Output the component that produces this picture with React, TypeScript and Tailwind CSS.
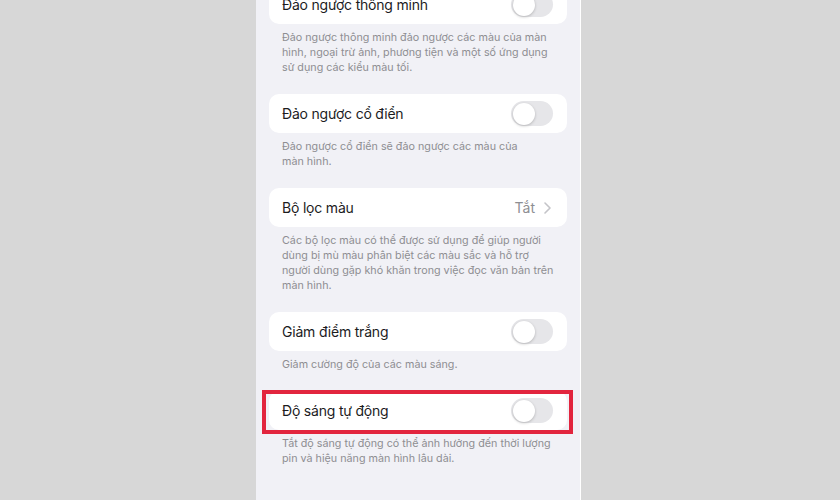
import type { ReactNode } from 'react'

type Row = {
  title: string
  value?: string
  desc: string[]
  highlight?: boolean
}

const ROWS: Row[] = [
  {
    title: 'Đảo ngược thông minh',
    desc: [
      'Đảo ngược thông minh đảo ngược các màu của màn',
      'hình, ngoại trừ ảnh, phương tiện và một số ứng dụng',
      'sử dụng các kiểu màu tối.',
    ],
  },
  {
    title: 'Đảo ngược cổ điển',
    desc: ['Đảo ngược cổ điển sẽ đảo ngược các màu của', 'màn hình.'],
  },
  {
    title: 'Bộ lọc màu',
    value: 'Tắt',
    desc: [
      'Các bộ lọc màu có thể được sử dụng để giúp người',
      'dùng bị mù màu phân biệt các màu sắc và hỗ trợ',
      'người dùng gặp khó khăn trong việc đọc văn bản trên',
      'màn hình.',
    ],
  },
  {
    title: 'Giảm điểm trắng',
    desc: ['Giảm cường độ của các màu sáng.'],
  },
  {
    title: 'Độ sáng tự động',
    highlight: true,
    desc: ['Tắt độ sáng tự động có thể ảnh hưởng đến thời lượng', 'pin và hiệu năng màn hình lâu dài.'],
  },
]

function Toggle() {
  return (
    <div className="relative h-[25px] w-[42px] rounded-full bg-[#e6e6e9]">
      <div className="absolute left-[1.5px] top-[1.5px] h-[22px] w-[22px] rounded-full bg-white shadow-[0_1px_3px_rgba(0,0,0,0.22)]" />
    </div>
  )
}

function Chevron() {
  return (
    <svg width="7" height="12" viewBox="0 0 7 12" fill="none" stroke="#c4c4c8" strokeWidth="1.6" strokeLinecap="round" strokeLinejoin="round" aria-hidden>
      <path d="M1 1l5 5-5 5" />
    </svg>
  )
}

function Card({ row }: { row: Row }) {
  let trailing: ReactNode = <Toggle />
  if (row.value) {
    trailing = (
      <div className="flex items-center gap-[9px] pr-[2px]">
        <span className="text-[14px] text-[#8e8e93]">{row.value}</span>
        <Chevron />
      </div>
    )
  }
  return (
    <div className="relative">
      <div className="flex h-[39px] items-center justify-between rounded-[10px] bg-white pl-[13px] pr-[14px]">
        <span className="text-[14px] tracking-[-0.2px] text-[#1c1c1e]">{row.title}</span>
        {trailing}
      </div>
      {row.highlight && (
        <div className="pointer-events-none absolute -left-[7px] -right-[6px] -top-[1px] -bottom-[4px] border-[4px] border-[#e2253e]" />
      )}
    </div>
  )
}

export default function App() {
  return (
    <div className="flex h-[500px] w-[840px] justify-center overflow-hidden bg-[#d7d7d7] font-['Inter','Noto_Sans',sans-serif]">
      <div className="ml-[-3px] w-[325px] border-r border-white bg-[#f1f1f6] px-[13px]">
        <div className="mt-[-15px] flex flex-col">
          {ROWS.map((row) => (
            <div key={row.title} className="pb-[19px]">
              <Card row={row} />
              <div className="pl-[13px] pt-[6px] text-[10.75px] leading-[15px] text-[#8e8e92]">
                {row.desc.map((line) => (
                  <div key={line} className="whitespace-nowrap">
                    {line}
                  </div>
                ))}
              </div>
            </div>
          ))}
        </div>
      </div>
    </div>
  )
}
